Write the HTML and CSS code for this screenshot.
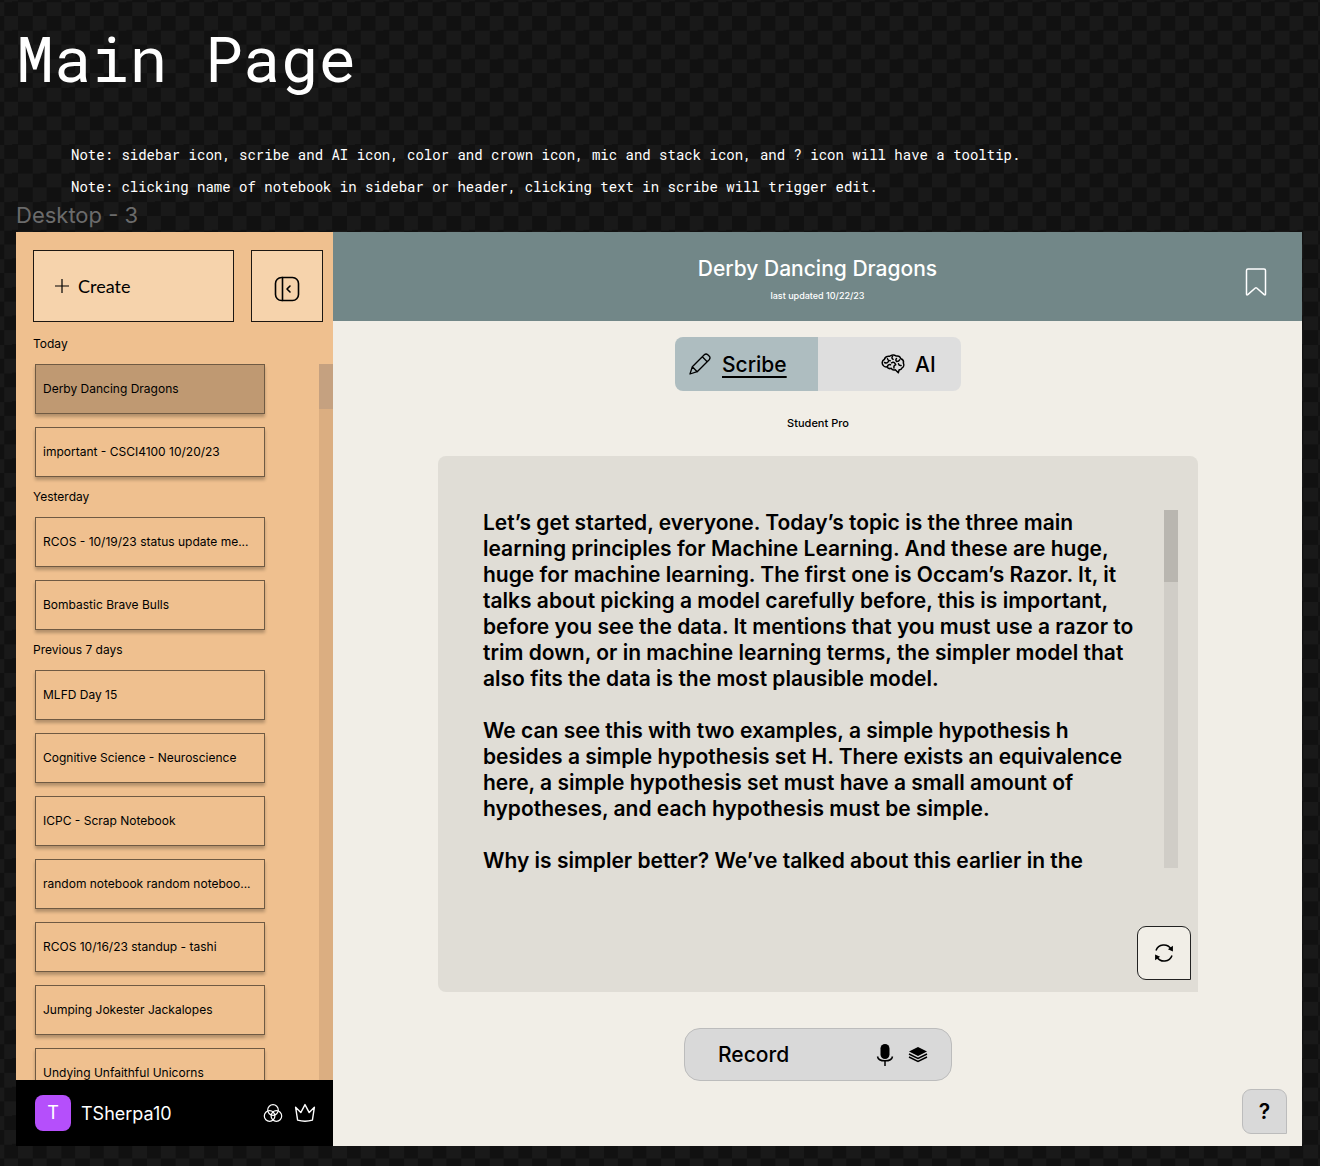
FILE: index.html
```html
<!DOCTYPE html>
<html lang="en">
<head>
<meta charset="utf-8">
<meta name="viewport" content="width=device-width, initial-scale=1">
<title>Main Page</title>
<link rel="stylesheet" href="styles.css">
</head>
<body>
<header class="board-head">
  <h1 class="board-title">Main Page</h1>
  <div class="notes">
    <p>Note: sidebar icon, scribe and AI icon, color and crown icon, mic and stack icon, and ? icon will have a tooltip.</p>
    <p>Note: clicking name of notebook in sidebar or header, clicking text in scribe will trigger edit.</p>
  </div>
  <p class="frame-label">Desktop - 3</p>
</header>

<div class="frame">
  <aside class="sidebar">
    <div class="sidebar-actions">
      <button class="create" type="button">
        <svg width="16" height="16" viewBox="0 0 16 16" fill="none" stroke="currentColor" stroke-width="1.2" aria-hidden="true"><path d="M8 1v14M1 8h14"/></svg>
        Create
      </button>
      <button class="collapse" type="button" aria-label="Collapse sidebar">
        <svg width="26" height="26" viewBox="0 0 26 26" fill="none" stroke="currentColor" stroke-width="1.6" stroke-linecap="round" stroke-linejoin="round" aria-hidden="true"><rect x="1.5" y="1.5" width="23" height="23" rx="6"/><path d="M8.500 1.500v23M16 10l-3 3 3 3"/></svg>
      </button>
    </div>

    <div class="notebooks">
      <nav class="notebook-list" aria-label="Notebooks">
        <h2 class="group-label">Today</h2>
        <ul class="group">
          <li><a class="notebook current" href="#" aria-current="page">Derby Dancing Dragons</a></li>
          <li><a class="notebook" href="#">important - CSCI4100 10/20/23</a></li>
        </ul>
        <h2 class="group-label">Yesterday</h2>
        <ul class="group">
          <li><a class="notebook" href="#">RCOS - 10/19/23 status update me...</a></li>
          <li><a class="notebook" href="#">Bombastic Brave Bulls</a></li>
        </ul>
        <h2 class="group-label">Previous 7 days</h2>
        <ul class="group">
          <li><a class="notebook" href="#">MLFD Day 15</a></li>
          <li><a class="notebook" href="#">Cognitive Science - Neuroscience</a></li>
          <li><a class="notebook" href="#">ICPC - Scrap Notebook</a></li>
          <li><a class="notebook" href="#">random notebook random noteboo...</a></li>
          <li><a class="notebook" href="#">RCOS 10/16/23 standup - tashi</a></li>
          <li><a class="notebook" href="#">Jumping Jokester Jackalopes</a></li>
          <li><a class="notebook" href="#">Undying Unfaithful Unicorns</a></li>
        </ul>
      </nav>
      <div class="side-track"><div class="side-thumb"></div></div>
    </div>

    <div class="account">
      <span class="avatar">T</span>
      <span class="user">TSherpa10</span>
      <button class="icon-button" type="button" aria-label="Color theme">
        <svg width="20" height="20" viewBox="0 0 20 20" fill="none" stroke="currentColor" stroke-width="1.2" aria-hidden="true"><circle cx="10" cy="7" r="5.3"/><circle cx="6.6" cy="13" r="5.3"/><circle cx="13.4" cy="13" r="5.3"/></svg>
      </button>
      <button class="icon-button" type="button" aria-label="Upgrade">
        <svg width="22" height="20" viewBox="0 0 22 20" fill="none" stroke="currentColor" stroke-width="1.4" stroke-linejoin="round" aria-hidden="true"><path d="M3.6 17.2 1.6 4.2l5.2 5.4L11 1.6l4.2 8 5.2-5.4-2 13Q11 19.400 3.600 17.200Z"/></svg>
      </button>
    </div>
  </aside>

  <main class="main">
    <header class="notebook-head">
      <h2 class="notebook-title">Derby Dancing Dragons</h2>
      <p class="updated">last updated 10/22/23</p>
      <button class="bookmark" type="button" aria-label="Bookmark">
        <svg width="22" height="28" viewBox="0 0 22 28" fill="none" stroke="currentColor" stroke-width="1.5" stroke-linejoin="round" aria-hidden="true"><path d="M3 1h16q1.500 0 1.500 1.500V26q0 1.500-1.300.600L11.700 20q-.7-.6-1.400 0L2.800 26.600q-1.300.900-1.300-.600V2.500Q1.500 1 3 1Z"/></svg>
      </button>
    </header>

    <div class="workspace">
      <div class="modes">
        <button class="mode active" type="button" aria-pressed="true">
          <svg width="24" height="24" viewBox="0 0 24 24" fill="none" stroke="currentColor" stroke-width="1.3" stroke-linejoin="round" stroke-linecap="round" aria-hidden="true"><path d="M2 22 4.300 14.800 16.300 2.800Q18 1.200 19.800 2.700l1.500 1.500Q22.800 6 21.200 7.700L9.200 19.700ZM4.300 14.800l4.900 4.900M14.300 4.800l4.900 4.900"/></svg>
          <span>Scribe</span>
        </button>
        <button class="mode ai" type="button" aria-pressed="false">
          <svg width="24" height="20" viewBox="0 0 24 20" fill="none" stroke="currentColor" stroke-width="1.5" stroke-linejoin="round" stroke-linecap="round" aria-hidden="true"><path d="M2.300 11.500C.5 9.500 1 6.500 3.300 5.500 4 3 6.500 1.800 8.700 2.300 10.500.7 13.500.7 15 2c2.300-.4 4.300.8 4.800 2.700 2 .6 3 2.500 2.500 4.300 1 2 .3 4.300-1.500 5.200-.5 1.300-1.500 1.800-2.600 1.600l-.9 2.900-3-3c-1.800.5-3.300 0-4-1.400-1.800.6-3.600 0-4.200-1.500-1.700.3-3.200-.2-3.800-1.300Z"/><path d="M3.500 8.500c1.500.8 3 .5 3.800-.8M6.500 4.800c.3 1.300 1.300 2 2.700 1.900M11.500 2.300c-1 1.200-.6 2.400.6 3M15.500 4.500c-1 1-.8 2.300.3 3 1.500-.2 2.300-.8 2.800-1.700M10.500 8.800c1.500-.8 3-.3 3.700.9M6.500 12.500c.3-1.500 1.500-2.200 3-1.800M13 14c-.5-1.500.3-2.800 1.800-3.200M17.500 9.800c.3 1.300 1.300 1.900 2.600 1.700"/></svg>
          <span>AI</span>
        </button>
      </div>
      <p class="plan">Student Pro</p>

      <section class="transcript">
        <div class="transcript-body">
          <div class="transcript-text">
            <p>Let’s get started, everyone. Today’s topic is the three main learning principles for Machine Learning. And these are huge, huge for machine learning. The first one is Occam’s Razor. It, it talks about picking a model carefully before, this is important, before you see the data. It mentions that you must use a razor to trim down, or in machine learning terms, the simpler model that also fits the data is the most plausible model.</p>
            <p>We can see this with two examples, a simple hypothesis h besides a simple hypothesis set H. There exists an equivalence here, a simple hypothesis set must have a small amount of hypotheses, and each hypothesis must be simple.</p>
            <p>Why is simpler better? We’ve talked about this earlier in the</p>
          </div>
          <div class="text-track"><div class="text-thumb"></div></div>
        </div>
        <button class="refresh" type="button" aria-label="Regenerate">
          <svg width="20" height="20" viewBox="0 0 20 20" fill="none" stroke="currentColor" stroke-width="1.5" aria-hidden="true"><path d="M2 7.500A8.300 8.300 0 0 1 17 6M18 12.500A8.300 8.300 0 0 1 3 14"/><path d="M18.900 2.800v5.700l-5-2.300ZM1.100 17.200v-5.700l5 2.300Z" fill="currentColor" stroke="none"/></svg>
        </button>
      </section>

      <button class="record" type="button">
        <span>Record</span>
        <svg width="18" height="24" viewBox="0 0 18 24" aria-hidden="true"><rect x="4.500" y="1" width="9" height="15" rx="4.500" fill="currentColor"/><path d="M1.500 13.500C2.500 19.300 15.500 19.300 16.500 13.500M9 18v5" fill="none" stroke="currentColor" stroke-width="1.500"/></svg>
        <svg width="20" height="18" viewBox="0 0 20 18" aria-hidden="true"><path d="M10 1l9 4.500-9 4.500-9-4.500Z" fill="currentColor"/><path d="M1 8l9 4.500L19 8M1 11l9 4.500 9-4.500" fill="none" stroke="currentColor" stroke-width="1.400"/></svg>
      </button>
    </div>

    <button class="help" type="button" aria-label="Help">?</button>
  </main>
</div>
</body>
</html>
```
FILE: styles.css
```css
* {
  box-sizing: border-box;
}

h1, h2, p, ul {
  margin: 0;
  padding: 0;
  font-weight: 400;
}

body {
  display: flex;
  flex-direction: column;
  height: 100vh;
  min-height: 900px;
  margin: 0;
  padding: 0 18px 20px 16px;
  background: conic-gradient(#191919 25%, #111 0 50%, #191919 0 75%, #111 0) 18px 16px / 2.165vw 2.165vw;
  color: #000;
  font-family: Inter, "Liberation Sans", sans-serif;
}

button {
  margin: 0;
  padding: 0;
  border: 0;
  color: inherit;
  font: inherit;
  cursor: pointer;
}

svg {
  display: block;
  flex: none;
}

/* Board header */
.board-head {
  color: #fff;
  font-family: "Roboto Mono", "DejaVu Sans Mono", monospace;
}

.board-title {
  padding: 18px 0 41px;
  font-size: 63px;
  line-height: 80px;
}

.notes {
  padding-left: 55px;
  font-size: 14px;
  line-height: 32px;
}

.frame-label {
  padding-bottom: 5px;
  color: #6b6b6b;
  font-family: Inter, "Liberation Sans", sans-serif;
  font-size: 22px;
  line-height: 24px;
}

/* Application frame */
.frame {
  display: flex;
  flex: 1;
  min-height: 0;
}

/* Sidebar */
.sidebar {
  display: flex;
  flex: none;
  flex-direction: column;
  width: 317px;
  background: #efc08f;
}

.sidebar-actions {
  display: flex;
  gap: 17px;
  padding: 18px 10px 2px 17px;
}

.create,
.collapse {
  display: flex;
  align-items: center;
  height: 72px;
  border: 1px solid #1d1712;
  background: #f6d3ac;
}

.create {
  flex: 1;
  gap: 8px;
  padding-left: 20px;
  font-family: Lato, sans-serif;
  font-size: 18px;
}

.collapse {
  justify-content: center;
  width: 72px;
  padding-top: 6px;
}

.notebooks {
  display: flex;
  flex: 1;
  justify-content: space-between;
  min-height: 0;
}

.notebook-list {
  width: 254px;
  padding-left: 17px;
  overflow: hidden;
}

.group-label {
  font-size: 12px;
  line-height: 40px;
}

.group {
  display: grid;
  grid-template-columns: minmax(0, 1fr);
  gap: 13px;
  padding: 0 5px 0 2px;
  list-style: none;
}

.notebook {
  display: block;
  height: 50px;
  padding-left: 7px;
  border: 1px solid #6f5a43;
  background: #efc08f;
  box-shadow: 0 3px 3px rgba(0, 0, 0, .25);
  color: inherit;
  font-size: 12px;
  line-height: 48px;
  text-decoration: none;
  white-space: nowrap;
}

.notebook.current {
  background: #bf9972;
}

.side-track {
  width: 14px;
  margin-top: 40px;
  background: #dbae81;
}

.side-thumb {
  height: 45px;
  background: #c5a180;
}

.account {
  display: flex;
  flex: none;
  align-items: center;
  height: 66px;
  padding: 0 17px 0 19px;
  background: #000;
  color: #fff;
}

.avatar {
  width: 36px;
  border-radius: 8px;
  background: #b54ffb;
  font-size: 18px;
  line-height: 36px;
  text-align: center;
}

.user {
  flex: 1;
  padding-left: 10px;
  font-size: 18px;
}

.icon-button {
  margin-left: 11px;
  background: none;
}

/* Notebook */
.main {
  position: relative;
  display: flex;
  flex: 1;
  flex-direction: column;
  min-width: 0;
  background: #f1eee7;
}

.notebook-head {
  position: relative;
  flex: none;
  height: 89px;
  padding-top: 22px;
  background: #728788;
  color: #fff;
  text-align: center;
}

.notebook-title {
  font-size: 21px;
  font-weight: 500;
  line-height: 30px;
}

.updated {
  font-size: 9px;
  font-weight: 500;
  line-height: 24px;
}

.bookmark {
  position: absolute;
  top: 36px;
  right: 35px;
  background: none;
}

.workspace {
  display: flex;
  flex: 1;
  flex-direction: column;
  align-items: center;
  min-height: 0;
  padding: 16px 104px 65px 105px;
}

.modes {
  display: grid;
  flex: none;
  grid-template-columns: 1fr 1fr;
  width: 286px;
  height: 54px;
  overflow: hidden;
  border-radius: 8px;
}

.mode {
  display: flex;
  gap: 10px;
  align-items: center;
  padding-left: 13px;
  background: #dedede;
  font-size: 21px;
  font-weight: 500;
}

.mode.active {
  background: #aebdc0;
}

.mode.active span {
  text-decoration: underline;
  text-decoration-thickness: 2px;
  text-underline-offset: 4px;
}

.mode.ai {
  padding-left: 63px;
}

.plan {
  font-size: 11px;
  font-weight: 500;
  line-height: 65px;
}

.transcript {
  position: relative;
  display: flex;
  flex: 1;
  flex-direction: column;
  align-self: stretch;
  min-height: 0;
  padding: 54px 20px 118px 45px;
  border-radius: 8px 8px 0 8px;
  background: #e0ddd6;
}

.transcript-body {
  display: flex;
  flex: 1;
  justify-content: space-between;
  min-height: 0;
}

.transcript-text {
  width: 666px;
  font-size: 21px;
  line-height: 26px;
}

.transcript-text p {
  margin-bottom: 26px;
  font-weight: 600;
}

.text-track {
  width: 14px;
  margin-bottom: 6px;
  background: #d0cdc7;
}

.text-thumb {
  height: 72px;
  background: #b9b6b0;
}

.refresh {
  position: absolute;
  right: 7px;
  bottom: 12px;
  display: grid;
  place-items: center;
  width: 54px;
  height: 54px;
  border: 1px solid #222;
  border-radius: 9px 9px 0 9px;
  background: #f1eee7;
}

.record {
  display: flex;
  flex: none;
  gap: 14px;
  align-items: center;
  width: 268px;
  height: 53px;
  margin-top: 36px;
  padding: 0 23px 0 33px;
  border: 1px solid #bcbcbc;
  border-radius: 16px;
  background: #d9d9d9;
  font-size: 21px;
  font-weight: 500;
}

.record span {
  flex: 1;
  text-align: left;
}

.help {
  position: absolute;
  right: 15px;
  bottom: 12px;
  width: 45px;
  height: 45px;
  border: 1px solid #bcbcbc;
  border-radius: 9px 9px 0 9px;
  background: #d9d9d9;
  font-size: 21px;
  font-weight: 600;
}
```
